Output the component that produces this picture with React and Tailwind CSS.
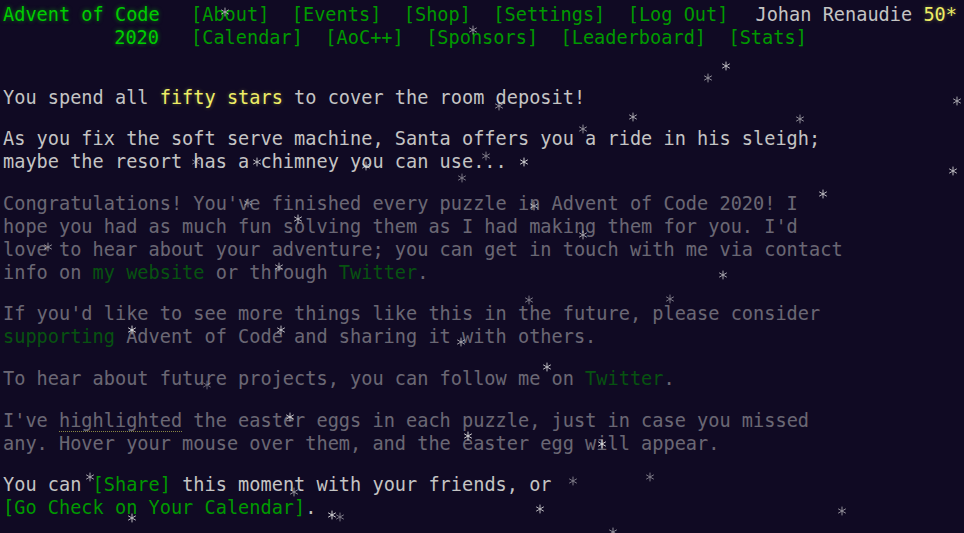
import React from 'react';

const STARS = [
  [225, 12, 0.7], [473, 30, 0.6], [726, 66, 0.8], [708, 78, 0.6], [499, 106, 0.6],
  [957, 101, 0.7], [633, 117, 0.7], [583, 129, 0.6], [800, 119, 0.6], [196, 162, 0.5],
  [257, 162, 0.8], [366, 166, 0.7], [486, 156, 0.5], [524, 162, 0.9], [462, 178, 0.5],
  [953, 171, 0.8], [823, 194, 0.8], [248, 203, 0.5], [534, 206, 0.7], [298, 219, 0.8],
  [583, 235, 0.7], [48, 247, 0.6], [279, 267, 0.7], [723, 275, 0.7], [529, 300, 0.5],
  [670, 299, 0.5], [132, 330, 0.9], [281, 330, 0.8], [461, 342, 0.7], [547, 367, 0.8],
  [207, 385, 0.4], [290, 417, 0.8], [468, 436, 0.9], [602, 444, 0.9], [90, 477, 0.7],
  [573, 481, 0.5], [650, 477, 0.5], [294, 492, 0.6], [540, 509, 0.8], [842, 511, 0.6],
  [132, 518, 0.8], [332, 515, 0.9], [340, 517, 0.5], [613, 532, 0.6],
];

const Star = ({ x, y, o }) => (
  <svg
    className="absolute pointer-events-none"
    style={{ left: x - 5, top: y - 5, opacity: o }}
    width="10"
    height="10"
    viewBox="0 0 10 10"
  >
    <g stroke="#e8e8e8" strokeWidth="1" strokeLinecap="round">
      <line x1="5" y1="1" x2="5" y2="9" />
      <line x1="1.5" y1="3" x2="8.5" y2="7" />
      <line x1="1.5" y1="7" x2="8.5" y2="3" />
    </g>
  </svg>
);

const NavLink = ({ children }) => (
  <a className="text-[#009900] whitespace-pre">[{children}]</a>
);

const Link = ({ children }) => <a className="text-[#009900]">{children}</a>;

export default function App() {
  return (
    <div className="relative min-h-screen h-[533px] overflow-hidden bg-[#100a23] text-[#c4c4c4] font-['DejaVu_Sans_Mono',monospace] text-[18.6px] leading-[23px]">
      <header className="pt-[3px] pl-[3px]">
        <div className="flex whitespace-pre">
          <h1 className="w-[156px] text-[#00cc00] [text-shadow:0_0_4px_#00cc0099]">
            Advent of Code
          </h1>
          <nav className="ml-[32px] flex gap-[22.4px]">
            <NavLink>About</NavLink>
            <NavLink>Events</NavLink>
            <NavLink>Shop</NavLink>
            <NavLink>Settings</NavLink>
            <NavLink>Log Out</NavLink>
          </nav>
          <div className="ml-[27px]">
            Johan Renaudie{' '}
            <span className="text-[#eeee66] [text-shadow:0_0_4px_#ffff6655]">50*</span>
          </div>
        </div>
        <div className="flex whitespace-pre">
          <h1 className="w-[156px] text-right text-[#00cc00] [text-shadow:0_0_4px_#00cc0099]">
            2020
          </h1>
          <nav className="ml-[32px] flex gap-[22.4px]">
            <NavLink>Calendar</NavLink>
            <NavLink>AoC++</NavLink>
            <NavLink>Sponsors</NavLink>
            <NavLink>Leaderboard</NavLink>
            <NavLink>Stats</NavLink>
          </nav>
        </div>
      </header>

      <main className="pt-[36.5px] pl-[3px] flex flex-col gap-[18.67px] whitespace-nowrap">
        <p>
          You spend all{' '}
          <span className="text-[#eeee66] [text-shadow:0_0_4px_#ffff6655]">fifty stars</span>{' '}
          to cover the room deposit!
        </p>
        <p>
          As you fix the soft serve machine, Santa offers you a ride in his sleigh;
          <br />
          maybe the resort has a chimney you can use...
        </p>
        <p className="opacity-50">
          Congratulations! You've finished every puzzle in Advent of Code 2020! I
          <br />
          hope you had as much fun solving them as I had making them for you. I'd
          <br />
          love to hear about your adventure; you can get in touch with me via contact
          <br />
          info on <Link>my website</Link> or through <Link>Twitter</Link>.
        </p>
        <p className="opacity-50">
          If you'd like to see more things like this in the future, please consider
          <br />
          <Link>supporting</Link> Advent of Code and sharing it with others.
        </p>
        <p className="opacity-50">
          To hear about future projects, you can follow me on <Link>Twitter</Link>.
        </p>
        <p className="opacity-50">
          I've{' '}
          <span className="border-b border-dotted border-[#ffff66]">highlighted</span>{' '}
          the easter eggs in each puzzle, just in case you missed
          <br />
          any. Hover your mouse over them, and the easter egg will appear.
        </p>
        <p>
          You can <Link>[Share]</Link> this moment with your friends, or
          <br />
          <Link>[Go Check on Your Calendar]</Link>.
        </p>
      </main>

      {STARS.map(([x, y, o], i) => (
        <Star key={i} x={x} y={y} o={o} />
      ))}
    </div>
  );
}
